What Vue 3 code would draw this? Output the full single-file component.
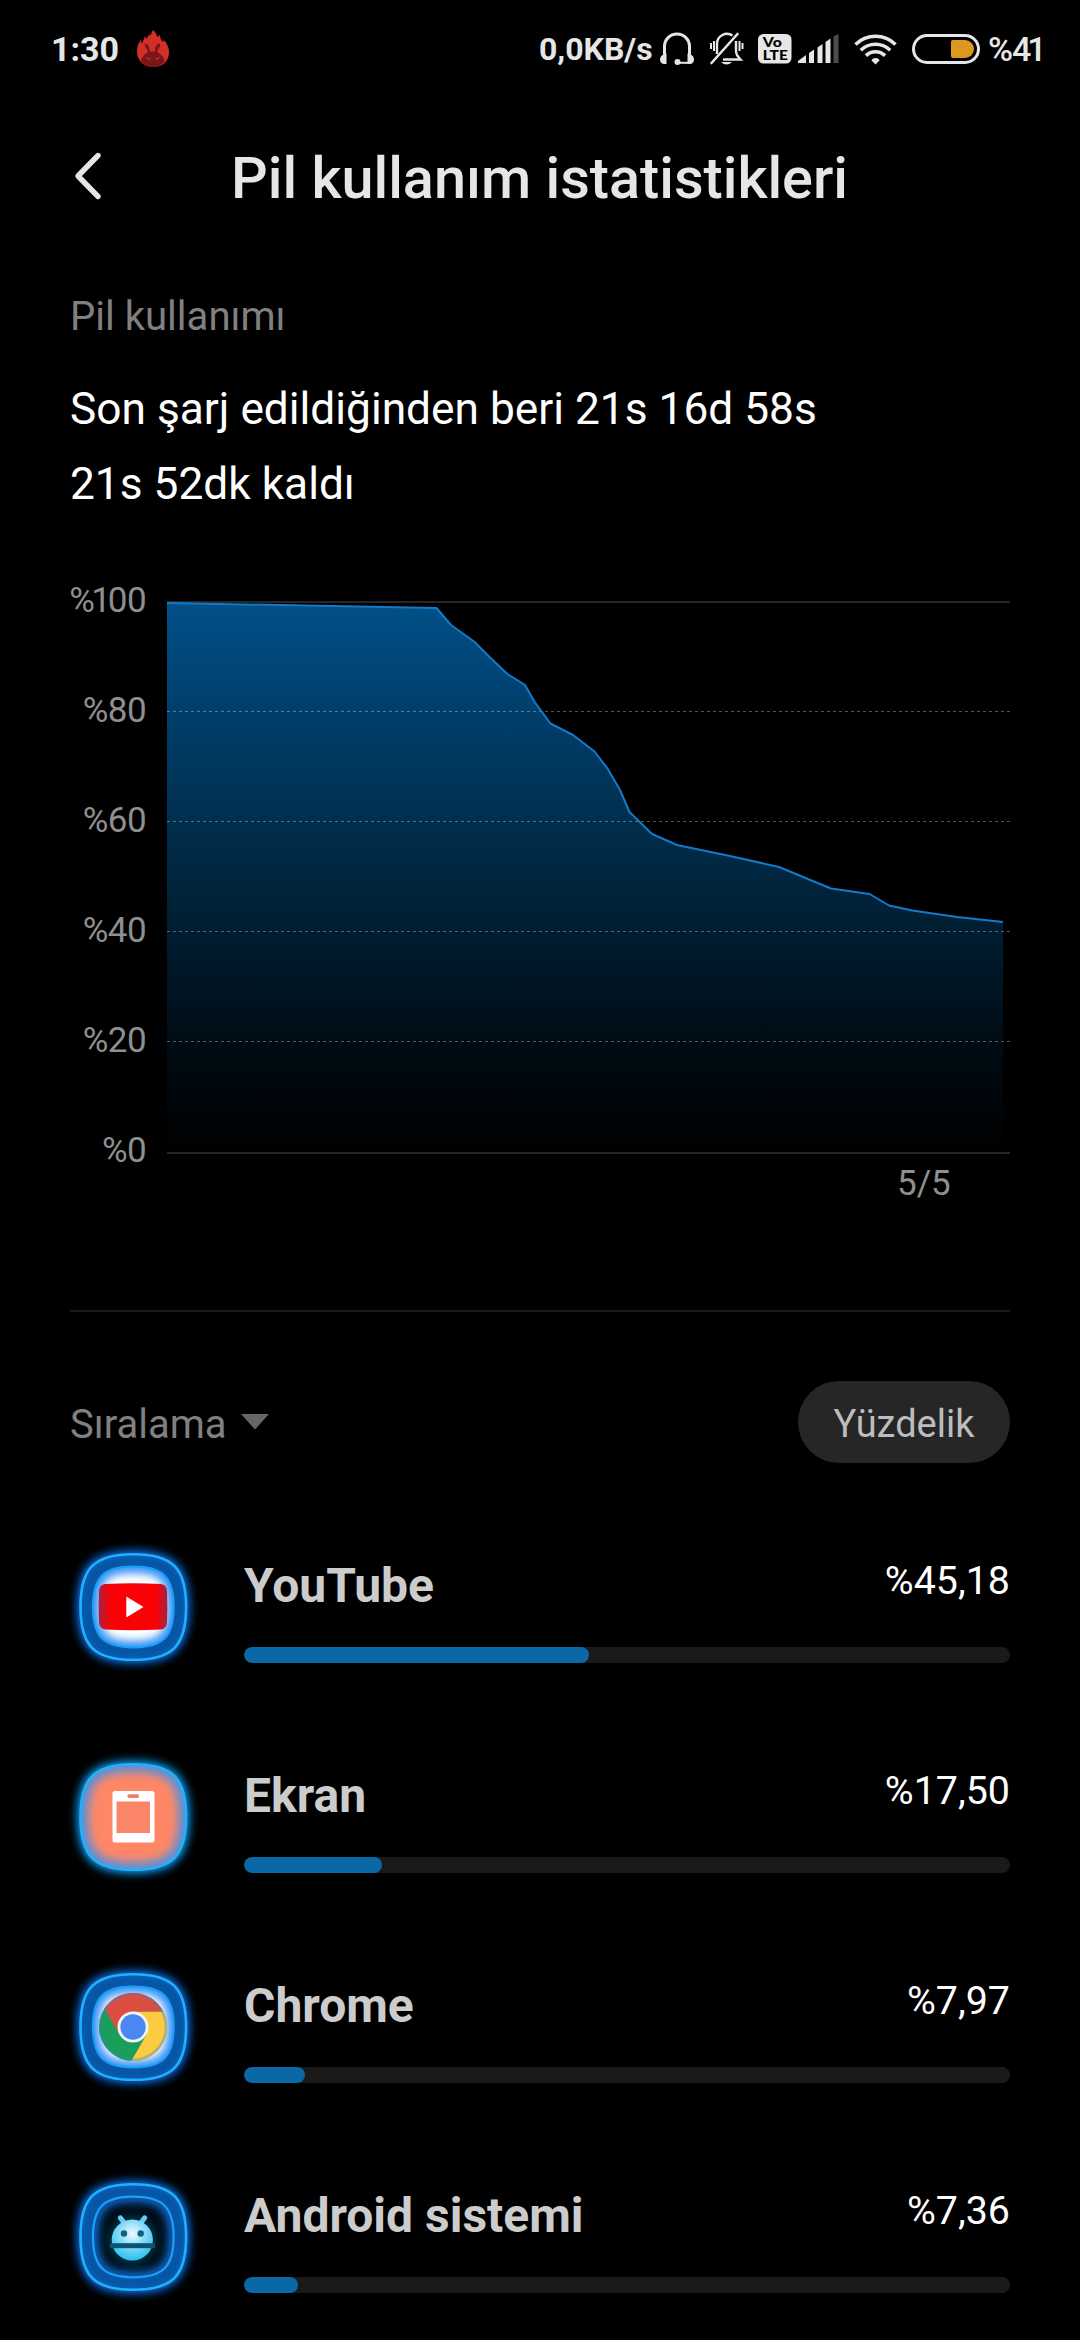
<script setup>
const levels = [100, 80, 60, 40, 20, 0]
const dashed = [110, 220, 330, 440]

const curve = [
  [0, 2], [269.5, 7], [284, 24], [307, 40.5], [323, 56.5], [340.5, 73], [358, 84],
  [368, 101.5], [383.5, 122.5], [406, 134], [427.5, 150.5], [440.5, 167.5], [453, 189],
  [462.5, 211], [485, 233], [510, 244], [563, 255], [612, 266], [664, 287.5],
  [702.5, 293], [722, 304.5], [745.5, 309.5], [790, 316], [836, 321],
]
const line = curve.map((p) => p.join(',')).join(' ')
const area = `0,550 ${line} 836,550`

const apps = [
  { id: 'youtube', name: 'YouTube', text: '%45,18', value: 45 },
  { id: 'screen', name: 'Ekran', text: '%17,50', value: 18 },
  { id: 'chrome', name: 'Chrome', text: '%7,97', value: 8 },
  { id: 'android', name: 'Android sistemi', text: '%7,36', value: 7 },
]

// Rounded "squircle" outline centred on the icon tile
function squircle(r) {
  const cx = 73.3, cy = 77, k = r * 0.74
  return `M${cx - r},${cy} C${cx - r},${cy - k} ${cx - k},${cy - r} ${cx},${cy - r}` +
    ` S${cx + r},${cy - k} ${cx + r},${cy} S${cx + k},${cy + r} ${cx},${cy + r}` +
    ` S${cx - r},${cy + k} ${cx - r},${cy}Z`
}
const outer = squircle(52.8)
const inner = squircle(40.3)
</script>

<template>
  <div class="screen">
    <header class="status">
      <span class="clock">1:30</span>
      <svg class="flame" width="34" height="38" viewBox="0 0 34 38">
        <path d="M17 37C7 37 1 30 1 21c0-4 1-8 4-11l1 4 3-8 1 3 4-5 0 2 3-6c2 2 4 4 4 7l3-2c0 3 1 5 3 7l1-2c3 4 5 7 5 12 0 9-6 15-16 15z" fill="#d22f27" />
        <path d="M4.500 31c2-5 5-8 7.500-9-1-3-3.500-5-3.500-8 3-1 5 2 5.500 7.500h5c0-5.500 2-8.500 5-7.500 1 3-2.500 5-3 8 3 1 6 4 8 9-3 4-7 6-12 6S8 35 4.500 31z" fill="#7c1519" />
        <path d="M10 27l5 2q-3 2-5-2zM24 27l-5 2q3 2 5-2z" fill="#d22f27" />
      </svg>
      <span class="grow"></span>
      <span class="speed">0,0KB/s</span>
      <svg class="phones" width="36" height="34" viewBox="0 0 36 34">
        <path d="M5.500 25V14.500a12.500 12.500 0 0 1 25 0V25" fill="none" stroke="#e6e6e6" stroke-width="3" />
        <path d="M7.500 21.500v10.500H5.500c-6 0-6-9 0-9.500zM28.500 21.500v10.500h2c6 0 6-9 0-9.500z" fill="#e6e6e6" />
        <path d="M19 30.800h12" stroke="#e6e6e6" stroke-width="2" />
        <circle cx="18.500" cy="30" r="3" fill="#e6e6e6" />
      </svg>
      <svg class="bell" width="36" height="34" viewBox="0 0 36 34">
        <g fill="none" stroke="#e6e6e6" stroke-width="2.400">
          <path d="M8 22V11.500a10 10 0 0 1 15.500-8M27 9v10c0 4 2 6 4.500 8.500H14" />
          <path d="M2 11v6M5 9v10M30.500 9v10M33.500 11v6" stroke-width="2" />
          <path d="M2.500 31L28.500 2" stroke-width="2.600" stroke-linecap="round" />
        </g>
        <path d="M12 30h11q-5.500 5-11 0z" fill="#e6e6e6" />
      </svg>
      <svg class="volte" width="34" height="30" viewBox="0 0 34 30">
        <rect width="33.500" height="29.500" rx="5.500" fill="#e6e6e6" />
        <text x="4.800" y="12.800" font-size="13.500" textLength="19" lengthAdjust="spacingAndGlyphs">Vo</text>
        <text x="4.800" y="26.200" font-size="14" textLength="25" lengthAdjust="spacingAndGlyphs">LTE</text>
      </svg>
      <svg class="signal" width="41" height="30" viewBox="0 0 41 30">
        <path d="M0 29v-2l8-6v8zM11 29V19l5-3.500V29zM19.500 29V13.500l5-3.500V29zM27.500 29V8l5-3.500V29z" fill="#e6e6e6" />
        <path d="M35.500 29V2.500l5-2.500V29z" fill="#4d4d4d" />
      </svg>
      <svg class="wifi" width="43" height="31" viewBox="0 0 43 31">
        <g fill="none" stroke="#e6e6e6" stroke-width="3.600">
          <path d="M1.500 10.500a28.500 28.500 0 0 1 40 0" />
          <path d="M6.800 16.200a21 21 0 0 1 29.400 0" />
          <path d="M12 21.600a13.600 13.600 0 0 1 19 0" />
        </g>
        <path d="M21.500 30.500l-4-4q.5-2.500 4-2.500t4 2.500z" fill="#e6e6e6" />
      </svg>
      <span class="battery"><i></i></span>
      <span class="level">%4<span class="one">1</span></span>
    </header>

    <div class="titlebar">
      <svg width="30" height="50" viewBox="0 0 30 50">
        <path d="M25 4.500L5 25l20 20.500" fill="none" stroke="#e6e6e6" stroke-width="5.400" stroke-linecap="round" stroke-linejoin="round" />
      </svg>
      <h1>Pil kullanım istatistikleri</h1>
    </div>

    <main>
      <p class="caption">Pil kullanımı</p>
      <p class="summary">Son şarj edildiğinden beri 21s 16d 58s</p>
      <p class="summary">21s 52dk kaldı</p>

      <section class="chart">
        <div class="axis">
          <div v-for="l in levels" :key="l" class="tick">%<span v-for="(c, i) in String(l)" :key="i" :class="{ one: c === '1' }">{{ c }}</span></div>
        </div>
        <div class="plot">
          <svg width="843" height="554" viewBox="0 0 843 554">
            <defs>
              <linearGradient id="fall" x1="0" y1="0" x2="0" y2="550" gradientUnits="userSpaceOnUse">
                <stop offset="0" stop-color="#005089" />
                <stop offset=".5" stop-color="#00263f" />
                <stop offset=".8" stop-color="#000c15" />
                <stop offset="1" stop-color="#000" />
              </linearGradient>
            </defs>
            <path d="M0 1H843M0 552H843" stroke="#262626" stroke-width="2" />
            <polygon :points="area" fill="url(#fall)" />
            <path v-for="y in dashed" :key="y" :d="`M0 ${y + 0.5}H843`" stroke="#fff" stroke-opacity=".32" stroke-dasharray="3 3" />
            <polyline :points="line" fill="none" stroke="#127ac8" stroke-width="2" stroke-linejoin="round" />
          </svg>
          <div class="date">5/5</div>
        </div>
      </section>

      <div class="toolbar">
        <span class="sort">Sıralama
          <svg width="28" height="16" viewBox="0 0 28 16"><path d="M0 0H28L14 15.500z" fill="#666" /></svg>
        </span>
        <button class="mode">Yüzdelik</button>
      </div>
    </main>

    <ul class="apps">
      <li v-for="app in apps" :key="app.id">
        <svg class="tile" width="140" height="150" viewBox="0 0 140 150">
          <defs>
            <filter :id="`b-${app.id}`" x="-30%" y="-30%" width="160%" height="160%"><feGaussianBlur stdDeviation="4" /></filter>
            <clipPath :id="`o-${app.id}`"><path :d="outer" /></clipPath>
            <clipPath :id="`i-${app.id}`"><path :d="inner" /></clipPath>
          </defs>
          <path :d="outer" :fill="app.id === 'screen' ? '#0b8be0' : '#0a66d0'" :stroke="app.id === 'screen' ? '#0b95e8' : '#0a6ce0'" stroke-width="8" :filter="`url(#b-${app.id})`" />

          <template v-if="app.id === 'screen'">
            <path :d="outer" fill="#ff8766" />
            <g :clip-path="`url(#o-${app.id})`">
              <path :d="outer" fill="none" stroke="#5f8fd4" stroke-width="16" :filter="`url(#b-${app.id})`" />
            </g>
            <path d="M55 51h37a2.500 2.500 0 0 1 2.500 2.500v46.500a2.500 2.500 0 0 1-2.500 2.500H55a2.500 2.500 0 0 1-2.500-2.500V53.500A2.500 2.500 0 0 1 55 51z" fill="#fff" />
            <rect x="56.500" y="61.500" width="33.500" height="31.500" fill="#fa8567" />
            <rect x="67.500" y="54.300" width="11.500" height="3.800" rx="1.900" fill="#ee7e66" />
          </template>

          <template v-else>
            <path :d="outer" fill="#0a4a90" />
            <g :clip-path="`url(#o-${app.id})`">
              <path :d="outer" fill="none" stroke="#0d6fd8" stroke-width="6" :filter="`url(#b-${app.id})`" />
              <path :d="inner" fill="none" stroke="#0d6fd8" stroke-width="4" :filter="`url(#b-${app.id})`" />
            </g>
            <path :d="inner" :fill="app.id === 'android' ? '#000b14' : '#fff'" />
            <g :clip-path="`url(#i-${app.id})`">
              <path :d="inner" fill="none" :stroke="app.id === 'android' ? '#0a62c0' : '#2d8df5'" stroke-width="12" :filter="`url(#b-${app.id})`" />
            </g>
            <path :d="inner" fill="none" stroke="#1c9ff8" stroke-width="2.200" />
          </template>

          <template v-if="app.id === 'youtube'">
            <defs>
              <linearGradient id="yt">
                <stop offset="0" stop-color="#a02448" /><stop offset=".16" stop-color="#f80205" />
                <stop offset=".84" stop-color="#f80205" /><stop offset="1" stop-color="#a02448" />
              </linearGradient>
            </defs>
            <path d="M45 54Q73 52.600 101 54 106.500 54.500 107 61 107.800 77 107 92 106.500 99 101 99.500 73 101 45 99.500 39.500 99 39 92 38.200 77 39 61 39.500 54.500 45 54z" fill="url(#yt)" />
            <path d="M66.300 66.500V87.500L83.500 77z" fill="#fff" />
          </template>

          <template v-if="app.id === 'chrome'">
            <circle cx="73" cy="77" r="34" fill="#1a9e5c" />
            <path d="M73 61.500H103.200A34 34 0 0 1 71.300 111L86.400 84.700z" fill="#fdcb42" />
            <path d="M44.500 58.500A34 34 0 0 1 103.200 61.500H73L59.600 84.700z" fill="#dc4e41" />
            <circle cx="73" cy="77" r="32.800" fill="none" stroke="#3c7fc0" stroke-opacity=".35" stroke-width="2.500" />
            <circle cx="73" cy="77" r="15.500" fill="#f3f3f5" />
            <circle cx="73" cy="77" r="12.700" fill="#4a87f2" />
          </template>

          <template v-if="app.id === 'android'">
            <radialGradient id="droid" cx=".5" cy=".35" r=".6">
              <stop offset="0" stop-color="#f0fbff" /><stop offset=".5" stop-color="#8fdcf8" /><stop offset="1" stop-color="#35c3f2" />
            </radialGradient>
            <circle cx="72.300" cy="80" r="24" fill="#0b5a78" fill-opacity=".55" :filter="`url(#b-${app.id})`" />
            <path d="M60.300 57.800L65 64M84.700 57.800L80 64" stroke="#5fcff5" stroke-width="5" stroke-linecap="round" />
            <circle cx="72.300" cy="80" r="20.600" fill="url(#droid)" />
            <rect x="50" y="83.200" width="45" height="5" fill="#0a5470" />
            <circle cx="64" cy="73.500" r="3.200" fill="#11607f" />
            <circle cx="80.700" cy="73.500" r="3.200" fill="#11607f" />
          </template>

          <path :d="outer" fill="none" stroke="#1fb2fb" stroke-width="2.600" />
        </svg>
        <div class="usage">
          <div class="labels"><strong>{{ app.name }}</strong><span>{{ app.text }}</span></div>
          <div class="track"><div class="fill" :style="{ width: app.value + '%' }"></div></div>
        </div>
      </li>
    </ul>
  </div>
</template>

<style>
body { background: #000; }
</style>

<style scoped>
.screen { width: 1080px; height: 2340px; overflow: hidden; background: #000; color: #fff; font-family: Roboto, "Noto Sans", sans-serif; }
svg { display: block; flex: none; }
p, h1, ul { margin: 0; padding: 0; }

.status { display: flex; align-items: center; height: 98px; box-sizing: border-box; padding: 0 36px 0 51px; color: #e6e6e6; white-space: nowrap; }
.clock { font-size: 34px; font-weight: 700; width: 85px; }
.grow { flex: 1; }
.speed { font-size: 32px; font-weight: 700; width: 120px; }
.bell { margin-left: 14px; }
.volte { margin-left: 13px; font-family: Lato, sans-serif; font-weight: 900; }
.signal { margin-left: 6px; }
.wifi { margin-left: 15px; }
.battery { box-sizing: border-box; width: 68px; height: 30px; margin-left: 15px; padding: 3px; border: 3px solid #e6e6e6; border-radius: 15px; display: flex; justify-content: flex-end; flex: none; }
.battery i { width: 23px; height: 18px; border-radius: 2px 9px 9px 2px; background: #de9820; }
.level { font-size: 34px; font-weight: 500; width: 56px; margin-left: 8px; letter-spacing: -1px; }
.one { margin: 0 -2.5px 0 -3px; }

.titlebar { display: flex; align-items: center; height: 156px; padding-left: 73px; }
.titlebar h1 { margin: 5px 0 0 128px; font-size: 57.6px; font-weight: 500; line-height: 70px; color: #e6e6e6; white-space: nowrap; }

main { padding: 0 70px; }
.caption { padding-top: 36px; height: 54px; line-height: 54px; font-size: 40.100px; color: #808080; }
.summary { height: 75px; line-height: 75px; font-size: 44.250px; white-space: nowrap; }
.caption + .summary { margin-top: 28px; }

.chart { display: flex; margin-top: 79px; height: 650px; }
.axis { width: 76px; margin: -18px 21px 0 0; color: #8f8f8f; }
.tick { display: flex; justify-content: flex-end; height: 110px; font-size: 35px; line-height: 36px; letter-spacing: -0.6px; }
.plot { width: 843px; }
.date { padding: 11px 0 0 730px; font-size: 35px; line-height: 36px; color: #8f8f8f; }

.toolbar { display: flex; justify-content: space-between; align-items: flex-start; border-top: 2px solid #1a1a1a; padding-top: 69px; height: 149px; margin-top: 59px; }
.sort { display: flex; align-items: center; font-size: 40px; line-height: 87px; color: #808080; }
.sort svg { margin: 0 0 5px 14px; }
.mode { box-sizing: border-box; width: 212px; height: 82px; border: 0; border-radius: 41px; padding: 3px 0 0; background: #262626; color: #bdbdbd; font: 38px Roboto, sans-serif; }

.apps { list-style: none; }
.apps li { display: flex; height: 210px; padding-left: 60px; }
.usage { width: 766px; margin-left: 44px; padding-top: 28px; }
.labels { display: flex; justify-content: space-between; height: 89px; }
.labels strong { font-size: 48px; font-weight: 700; line-height: 56px; color: #ccc; }
.labels span { font-size: 39.400px; line-height: 46px; }
.track { height: 16px; border-radius: 8px; background: #1a1a1a; overflow: hidden; }
.fill { height: 16px; border-radius: 8px; background: #0a68a6; }
</style>
